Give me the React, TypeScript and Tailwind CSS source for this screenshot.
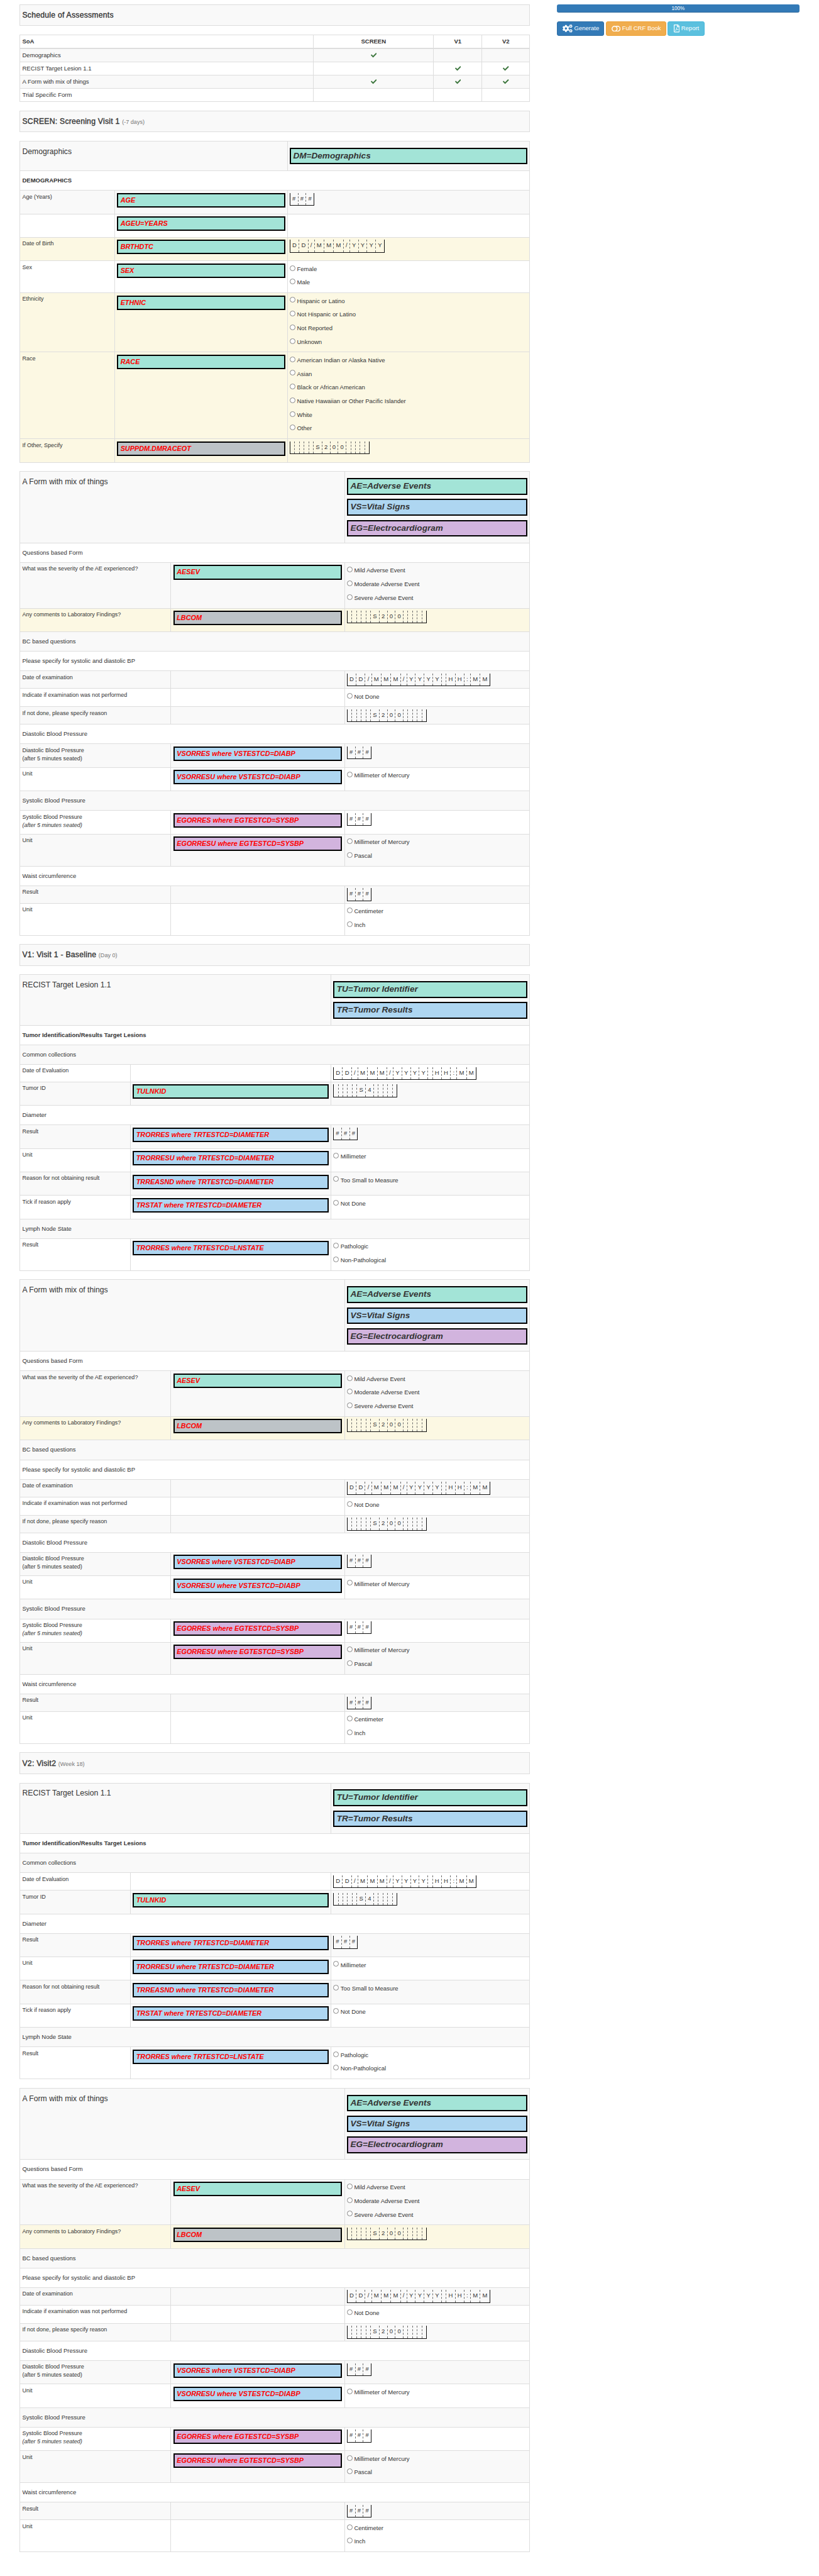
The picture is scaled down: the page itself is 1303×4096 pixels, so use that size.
import React from "react";
import { FaCheck, FaCogs, FaRegFilePdf } from "react-icons/fa";

type Tone = "teal" | "blue" | "purple" | "gray";

const toneClass: Record<Tone, string> = {
  teal: "bg-[#a3e4d7]",
  blue: "bg-[#aed6f1]",
  purple: "bg-[#d2b4de]",
  gray: "bg-[#bdc3c7]",
};

type Row = {
  h: string;
  heading?: string;
  bold?: boolean;
  label?: string;
  note?: string;
  noteItalic?: boolean;
  ann?: [Tone, string];
  boxes?: string;
  options?: string[];
  warn?: boolean;
};

type Form = {
  title: string;
  headH: string;
  col1: string;
  col2: string;
  titleCol: string;
  domains: [Tone, string][];
  rows: Row[];
};

const H41 = "h-[27.83px]";
const H43 = "h-[29.18px]";
const H46 = "h-[31.22px]";
const H55 = "h-[37.33px]";
const H75 = "h-[50.9px]";
const H107 = "h-[72.62px]";
const H139 = "h-[94.34px]";
const H203 = "h-[137.78px]";

const S200 = "     S200     ";
const S4 = "     S4     ";
const DATETIME = "DD/MMM/YYYY HH:MM";

const demographics: Form = {
  title: "Demographics",
  headH: "h-[47.19px]",
  col1: "w-[149.66px]",
  col2: "w-[274.86px]",
  titleCol: "w-[424.52px]",
  domains: [["teal", "DM=Demographics"]],
  rows: [
    { h: H46, heading: "DEMOGRAPHICS", bold: true },
    { h: H55, label: "Age (Years)", ann: ["teal", "AGE"], boxes: "###" },
    { h: H55, label: "", ann: ["teal", "AGEU=YEARS"] },
    { h: H55, label: "Date of Birth", ann: ["teal", "BRTHDTC"], boxes: "DD/MMM/YYYY", warn: true },
    { h: H75, label: "Sex", ann: ["teal", "SEX"], options: ["Female", "Male"] },
    {
      h: H139,
      label: "Ethnicity",
      ann: ["teal", "ETHNIC"],
      options: ["Hispanic or Latino", "Not Hispanic or Latino", "Not Reported", "Unknown"],
      warn: true,
    },
    {
      h: H203,
      label: "Race",
      ann: ["teal", "RACE"],
      options: [
        "American Indian or Alaska Native",
        "Asian",
        "Black or African American",
        "Native Hawaiian or Other Pacific Islander",
        "White",
        "Other",
      ],
      warn: true,
    },
    { h: H55, label: "If Other, Specify", ann: ["gray", "SUPPDM.DMRACEOT"], boxes: S200, warn: true },
  ],
};

const mixedForm: Form = {
  title: "A Form with mix of things",
  headH: "h-[113.7px]",
  col1: "w-[239.25px]",
  col2: "w-[276.22px]",
  titleCol: "w-[515.47px]",
  domains: [
    ["teal", "AE=Adverse Events"],
    ["blue", "VS=Vital Signs"],
    ["purple", "EG=Electrocardiogram"],
  ],
  rows: [
    { h: H46, heading: "Questions based Form" },
    {
      h: H107,
      label: "What was the severity of the AE experienced?",
      ann: ["teal", "AESEV"],
      options: ["Mild Adverse Event", "Moderate Adverse Event", "Severe Adverse Event"],
    },
    { h: H55, label: "Any comments to Laboratory Findings?", ann: ["gray", "LBCOM"], boxes: S200, warn: true },
    { h: H46, heading: "BC based questions" },
    { h: H46, heading: "Please specify for systolic and diastolic BP" },
    { h: H41, label: "Date of examination", boxes: DATETIME },
    { h: H43, label: "Indicate if examination was not performed", options: ["Not Done"] },
    { h: H41, label: "If not done, please specify reason", boxes: S200 },
    { h: H46, heading: "Diastolic Blood Pressure" },
    {
      h: H55,
      label: "Diastolic Blood Pressure",
      note: "(after 5 minutes seated)",
      ann: ["blue", "VSORRES where VSTESTCD=DIABP"],
      boxes: "###",
    },
    { h: H55, label: "Unit", ann: ["blue", "VSORRESU where VSTESTCD=DIABP"], options: ["Millimeter of Mercury"] },
    { h: H46, heading: "Systolic Blood Pressure" },
    {
      h: H55,
      label: "Systolic Blood Pressure",
      note: "(after 5 minutes seated)",
      noteItalic: true,
      ann: ["purple", "EGORRES where EGTESTCD=SYSBP"],
      boxes: "###",
    },
    {
      h: H75,
      label: "Unit",
      ann: ["purple", "EGORRESU where EGTESTCD=SYSBP"],
      options: ["Millimeter of Mercury", "Pascal"],
    },
    { h: H46, heading: "Waist circumference" },
    { h: H41, label: "Result", boxes: "###" },
    { h: H75, label: "Unit", options: ["Centimeter", "Inch"] },
  ],
};

const recist: Form = {
  title: "RECIST Target Lesion 1.1",
  headH: "h-[80.45px]",
  col1: "w-[174.77px]",
  col2: "w-[318.98px]",
  titleCol: "w-[493.75px]",
  domains: [
    ["teal", "TU=Tumor Identifier"],
    ["blue", "TR=Tumor Results"],
  ],
  rows: [
    { h: H46, heading: "Tumor Identification/Results Target Lesions", bold: true },
    { h: H46, heading: "Common collections" },
    { h: H41, label: "Date of Evaluation", boxes: DATETIME },
    { h: H55, label: "Tumor ID", ann: ["teal", "TULNKID"], boxes: S4 },
    { h: H46, heading: "Diameter" },
    { h: H55, label: "Result", ann: ["blue", "TRORRES where TRTESTCD=DIAMETER"], boxes: "###" },
    { h: H55, label: "Unit", ann: ["blue", "TRORRESU where TRTESTCD=DIAMETER"], options: ["Millimeter"] },
    {
      h: H55,
      label: "Reason for not obtaining result",
      ann: ["blue", "TRREASND where TRTESTCD=DIAMETER"],
      options: ["Too Small to Measure"],
    },
    { h: H55, label: "Tick if reason apply", ann: ["blue", "TRSTAT where TRTESTCD=DIAMETER"], options: ["Not Done"] },
    { h: H46, heading: "Lymph Node State" },
    {
      h: H75,
      label: "Result",
      ann: ["blue", "TRORRES where TRTESTCD=LNSTATE"],
      options: ["Pathologic", "Non-Pathological"],
    },
  ],
};

function CharBoxes({ text }: { text: string }) {
  const chars = text.split("");
  return (
    <div className="flex h-[20.4px] w-fit border-b border-l border-[#111] text-[9.5px] leading-[18.6px]">
      {chars.map((c, i) => (
        <span
          key={i}
          className={
            i === chars.length - 1
              ? "border-r border-[#111] px-[3.22px]"
              : "border-r border-dashed border-[#6a6a6a] px-[3.22px]"
          }
        >
          {c.trim()}
        </span>
      ))}
    </div>
  );
}

function Options({ items }: { items: string[] }) {
  return (
    <div className="flex flex-col">
      {items.map((o) => (
        <label key={o} className="flex h-[21.72px] items-start gap-[2.6px]">
          <span className="mt-[2.9px] size-[9px] shrink-0 rounded-full border border-[#858585] bg-white" />
          <span className="mt-[2px] text-[9.5px] leading-[13.57px] whitespace-nowrap">{o}</span>
        </label>
      ))}
    </div>
  );
}

function FormTable({ form }: { form: Form }) {
  return (
    <section className="mb-[13.57px] border-t border-l border-r border-[#ddd]">
      <div className={`flex border-b border-[#ddd] bg-[#f9f9f9] ${form.headH}`}>
        <h4 className={`shrink-0 pt-[9.9px] pl-[3.3px] text-[12.2px] leading-[13.4px] ${form.titleCol}`}>
          {form.title}
        </h4>
        <div className="flex grow flex-col gap-[6.79px] border-l border-[#ddd] px-[3.2px] pt-[9.9px]">
          {form.domains.map(([tone, text]) => (
            <div
              key={text}
              className={`h-[26.47px] shrink-0 border-2 border-black pl-[3.6px] text-[13.57px] leading-[22.2px] font-bold italic ${toneClass[tone]}`}
            >
              {text}
            </div>
          ))}
        </div>
      </div>
      {form.rows.map((row, i) => {
        const bg = row.warn ? "bg-[#fcf8e3]" : i % 2 === 1 ? "bg-[#f9f9f9]" : "bg-white";
        if (row.heading) {
          return (
            <div
              key={i}
              className={`flex items-center border-b border-[#ddd] pl-[3.3px] text-[9.5px] ${row.h} ${bg} ${row.bold ? "font-bold" : ""}`}
            >
              {row.heading}
            </div>
          );
        }
        return (
          <div key={i} className={`flex border-b border-[#ddd] ${row.h} ${bg}`}>
            <div className={`shrink-0 pt-[3.3px] pl-[3.3px] text-[9.03px] leading-[12.9px] ${form.col1}`}>
              <p>{row.label}</p>
              {row.note && <p className={row.noteItalic ? "italic" : ""}>{row.note}</p>}
            </div>
            <div className={`shrink-0 border-l border-[#ddd] px-[3.2px] pt-[3.4px] ${form.col2}`}>
              {row.ann && (
                <div
                  className={`h-[23.07px] border-2 border-black pl-[3.6px] text-[10.86px] leading-[18.2px] font-bold text-[#f00] italic ${toneClass[row.ann[0]]}`}
                >
                  {row.ann[1]}
                </div>
              )}
            </div>
            <div className="grow border-l border-[#ddd] pt-[3.4px] pl-[3.2px]">
              {row.boxes && <CharBoxes text={row.boxes} />}
              {row.options && <Options items={row.options} />}
            </div>
          </div>
        );
      })}
    </section>
  );
}

function Banner({ title, small }: { title: string; small?: string }) {
  return (
    <div className="mb-[13.57px] flex h-[34.61px] items-center border border-[#ddd] bg-[#f9f9f9] pl-[3.3px]">
      <h4 className="text-[12.2px] tracking-[0.25px] [-webkit-text-stroke:0.35px_#333]">
        {title}
        {small && (
          <small className="ml-[3.6px] text-[9.1px] tracking-normal text-[#777] [-webkit-text-stroke:0]">{small}</small>
        )}
      </h4>
    </div>
  );
}

const schedule: [string, boolean, boolean, boolean][] = [
  ["Demographics", true, false, false],
  ["RECIST Target Lesion 1.1", false, true, true],
  ["A Form with mix of things", true, true, true],
  ["Trial Specific Form", false, false, false],
];

function Schedule() {
  const cols = "grid grid-cols-[465.9px_191.4px_76.7px_1fr]";
  const cell = "flex items-center justify-center border-l border-[#ddd]";
  return (
    <section className="mb-[13.57px] border-t border-r border-l border-[#ddd] text-[9.5px]">
      <div className={`${cols} h-[22.07px] border-b-2 border-[#ddd] font-bold`}>
        <div className="flex items-center pl-[3.3px]">SoA</div>
        <div className={cell}>SCREEN</div>
        <div className={cell}>V1</div>
        <div className={cell}>V2</div>
      </div>
      {schedule.map(([name, ...marks], i) => (
        <div key={name} className={`${cols} h-[21.04px] border-b border-[#ddd] ${i % 2 === 0 ? "bg-[#f9f9f9]" : "bg-white"}`}>
          <div className="flex items-center pl-[3.3px]">{name}</div>
          {marks.map((m, j) => (
            <div key={j} className={cell}>
              {m && <FaCheck className="size-[9.5px] text-[#3c763d]" />}
            </div>
          ))}
        </div>
      ))}
    </section>
  );
}

function ToggleIcon() {
  return (
    <svg viewBox="0 0 21 14" className="h-[9.5px] w-[14.25px]" fill="none" stroke="currentColor" strokeWidth="2.1">
      <circle cx="7" cy="7" r="5.9" />
      <path d="M10.5 1.1H14a5.9 5.9 0 0 1 0 11.8H10.5" />
    </svg>
  );
}

function SidePanel() {
  const btn = "flex h-[23.07px] items-center rounded-[3px] border text-[9.5px] whitespace-nowrap text-white";
  return (
    <aside className="ml-[42.7px] w-[385.5px]">
      <div className="h-[13.57px] rounded-[3px] bg-[#337ab7] text-center text-[8.15px] leading-[13.57px] text-white shadow-[inset_0_-1px_0_rgba(0,0,0,0.15)]">
        100%
      </div>
      <div className="mt-[13.57px] flex gap-[2.7px]">
        <button className={`${btn} w-[75.2px] gap-[2.8px] border-[#2e6da4] bg-[#337ab7] pl-[7.8px]`}>
          <FaCogs className="h-[12.7px] w-[15.8px]" />
          Generate
        </button>
        <button className={`${btn} w-[95.7px] gap-[2.7px] border-[#eea236] bg-[#f0ad4e] pl-[7.8px]`}>
          <ToggleIcon />
          Full CRF Book
        </button>
        <button className={`${btn} w-[58.2px] gap-[2.8px] border-[#46b8da] bg-[#5bc0de] pl-[8.2px]`}>
          <FaRegFilePdf className="h-[12.4px] w-[9.3px]" />
          Report
        </button>
      </div>
    </aside>
  );
}

export default function App() {
  return (
    <div className="flex h-[4096px] w-[1303px] overflow-hidden bg-white pt-[6.79px] pl-[31.2px] font-['Liberation_Sans',Arial,sans-serif] text-[#333]">
      <main className="w-[812.3px] shrink-0">
        <Banner title="Schedule of Assessments" />
        <Schedule />
        <Banner title="SCREEN: Screening Visit 1" small="(-7 days)" />
        <FormTable form={demographics} />
        <FormTable form={mixedForm} />
        <Banner title="V1: Visit 1 - Baseline" small="(Day 0)" />
        <FormTable form={recist} />
        <FormTable form={mixedForm} />
        <Banner title="V2: Visit2" small="(Week 18)" />
        <FormTable form={recist} />
        <FormTable form={mixedForm} />
      </main>
      <SidePanel />
    </div>
  );
}
